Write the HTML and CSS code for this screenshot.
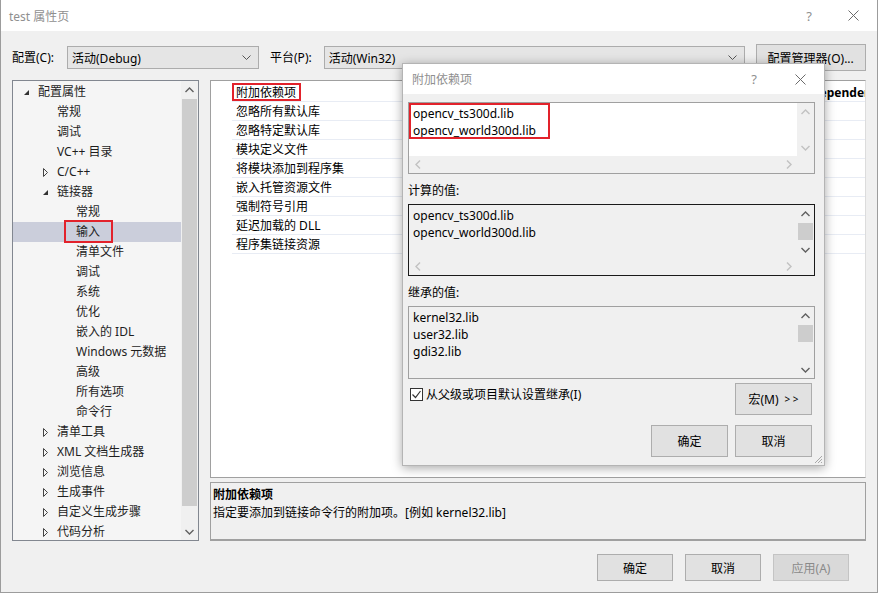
FILE: index.html
```html
<!DOCTYPE html>
<html lang="zh-CN">
<head>
    <meta charset="UTF-8">
    <meta name="viewport" content="width=device-width, initial-scale=1.0">
    <title>test 属性页</title>
    <link rel="stylesheet" href="styles.css">
</head>
<body>
    <div class="window">
        <div class="titlebar">
            <span class="title">test 属性页</span>
            <span class="help">?</span>
            <span class="close">
                <svg width="11" height="11" viewBox="0 0 11 11"><path d="M0.5 0.5 L10.5 10.5 M10.5 0.5 L0.5 10.5" stroke="#6b6b6b" stroke-width="1"/></svg>
            </span>
        </div>
        <div class="body">
            <div class="config_row">
                <span class="label">配置(C):</span>
                <div class="select sel_config">
                    <span>活动(Debug)</span>
                    <svg width="9" height="6" viewBox="0 0 9 6"><path d="M0.5 0.5 L4.5 4.5 L8.5 0.5" stroke="#555" fill="none"/></svg>
                </div>
                <span class="label">平台(P):</span>
                <div class="select sel_platform">
                    <span>活动(Win32)</span>
                    <svg width="9" height="6" viewBox="0 0 9 6"><path d="M0.5 0.5 L4.5 4.5 L8.5 0.5" stroke="#555" fill="none"/></svg>
                </div>
                <div class="btn btn_manager">配置管理器(O)...</div>
            </div>

            <div class="main">
                <div class="tree">
                    <div class="tree_rows">
                        <div class="trow lv0"><span class="exp"><svg width="7" height="7" viewBox="0 0 7 7"><polygon points="6,1 6,6 1,6" fill="#333"/></svg></span>配置属性</div>
                        <div class="trow lv1"><span class="exp"></span>常规</div>
                        <div class="trow lv1"><span class="exp"></span>调试</div>
                        <div class="trow lv1"><span class="exp"></span>VC++ 目录</div>
                        <div class="trow lv1"><span class="exp"><svg width="7" height="9" viewBox="0 0 7 9"><polygon points="1.5,0.5 5.5,4.5 1.5,8.5" fill="none" stroke="#444"/></svg></span>C/C++</div>
                        <div class="trow lv1"><span class="exp"><svg width="7" height="7" viewBox="0 0 7 7"><polygon points="6,1 6,6 1,6" fill="#333"/></svg></span>链接器</div>
                        <div class="trow lv2"><span class="exp"></span>常规</div>
                        <div class="trow lv2 selected"><span class="exp"></span><span class="mark mark_tree">输入</span></div>
                        <div class="trow lv2"><span class="exp"></span>清单文件</div>
                        <div class="trow lv2"><span class="exp"></span>调试</div>
                        <div class="trow lv2"><span class="exp"></span>系统</div>
                        <div class="trow lv2"><span class="exp"></span>优化</div>
                        <div class="trow lv2"><span class="exp"></span>嵌入的 IDL</div>
                        <div class="trow lv2"><span class="exp"></span>Windows 元数据</div>
                        <div class="trow lv2"><span class="exp"></span>高级</div>
                        <div class="trow lv2"><span class="exp"></span>所有选项</div>
                        <div class="trow lv2"><span class="exp"></span>命令行</div>
                        <div class="trow lv1"><span class="exp"><svg width="7" height="9" viewBox="0 0 7 9"><polygon points="1.5,0.5 5.5,4.5 1.5,8.5" fill="none" stroke="#444"/></svg></span>清单工具</div>
                        <div class="trow lv1"><span class="exp"><svg width="7" height="9" viewBox="0 0 7 9"><polygon points="1.5,0.5 5.5,4.5 1.5,8.5" fill="none" stroke="#444"/></svg></span>XML 文档生成器</div>
                        <div class="trow lv1"><span class="exp"><svg width="7" height="9" viewBox="0 0 7 9"><polygon points="1.5,0.5 5.5,4.5 1.5,8.5" fill="none" stroke="#444"/></svg></span>浏览信息</div>
                        <div class="trow lv1"><span class="exp"><svg width="7" height="9" viewBox="0 0 7 9"><polygon points="1.5,0.5 5.5,4.5 1.5,8.5" fill="none" stroke="#444"/></svg></span>生成事件</div>
                        <div class="trow lv1"><span class="exp"><svg width="7" height="9" viewBox="0 0 7 9"><polygon points="1.5,0.5 5.5,4.5 1.5,8.5" fill="none" stroke="#444"/></svg></span>自定义生成步骤</div>
                        <div class="trow lv1"><span class="exp"><svg width="7" height="9" viewBox="0 0 7 9"><polygon points="1.5,0.5 5.5,4.5 1.5,8.5" fill="none" stroke="#444"/></svg></span>代码分析</div>
                    </div>
                    <div class="tree_scroll">
                        <div class="arrow"><svg width="9" height="6" viewBox="0 0 9 6"><path d="M0.5 5 L4.5 1 L8.5 5" stroke="#606060" stroke-width="1.4" fill="none"/></svg></div>
                        <div class="tree_thumb"></div>
                        <div class="spacer"></div>
                        <div class="arrow"><svg width="9" height="6" viewBox="0 0 9 6"><path d="M0.5 1 L4.5 5 L8.5 1" stroke="#606060" stroke-width="1.4" fill="none"/></svg></div>
                    </div>
                </div>

                <div class="right">
                    <div class="grid">
                        <div class="prow"><span class="pname"><span class="mark mark_prop">附加依赖项</span></span><span class="pval">opencv_ts300d.lib;opencv_world300d.lib;%(AdditionalDependencies)</span></div>
                        <div class="prow"><span class="pname">忽略所有默认库</span><span class="pval"></span></div>
                        <div class="prow"><span class="pname">忽略特定默认库</span><span class="pval"></span></div>
                        <div class="prow"><span class="pname">模块定义文件</span><span class="pval"></span></div>
                        <div class="prow"><span class="pname">将模块添加到程序集</span><span class="pval"></span></div>
                        <div class="prow"><span class="pname">嵌入托管资源文件</span><span class="pval"></span></div>
                        <div class="prow"><span class="pname">强制符号引用</span><span class="pval"></span></div>
                        <div class="prow"><span class="pname">延迟加载的 DLL</span><span class="pval"></span></div>
                        <div class="prow"><span class="pname">程序集链接资源</span><span class="pval"></span></div>
                    </div>
                    <div class="desc">
                        <div class="desc_title">附加依赖项</div>
                        <div class="desc_text">指定要添加到链接命令行的附加项。[例如 kernel32.lib]</div>
                    </div>
                </div>
            </div>

            <div class="footer">
                <div class="btn">确定</div>
                <div class="btn">取消</div>
                <div class="btn disabled">应用(A)</div>
            </div>
        </div>

        <div class="dialog">
            <div class="dlg_titlebar">
                <span class="dlg_title">附加依赖项</span>
                <span class="help">?</span>
                <span class="close">
                    <svg width="11" height="11" viewBox="0 0 11 11"><path d="M0.5 0.5 L10.5 10.5 M10.5 0.5 L0.5 10.5" stroke="#6b6b6b" stroke-width="1"/></svg>
                </span>
            </div>
            <div class="dlg_body">
                <div class="listbox edit">
                    <div class="list_text"><span class="mark mark_edit">opencv_ts300d.lib<br>opencv_world300d.lib</span></div>
                    <div class="vbar">
                        <div class="arrow"><svg width="9" height="6" viewBox="0 0 9 6"><path d="M0.5 5 L4.5 1 L8.5 5" stroke="#c2c2c2" stroke-width="1.4" fill="none"/></svg></div>
                        <div class="spacer"></div>
                        <div class="arrow"><svg width="9" height="6" viewBox="0 0 9 6"><path d="M0.5 1 L4.5 5 L8.5 1" stroke="#c2c2c2" stroke-width="1.4" fill="none"/></svg></div>
                    </div>
                    <div class="hbar">
                        <div class="arrow"><svg width="6" height="9" viewBox="0 0 6 9"><path d="M5 0.5 L1 4.5 L5 8.5" stroke="#c2c2c2" stroke-width="1.4" fill="none"/></svg></div>
                        <div class="arrow"><svg width="6" height="9" viewBox="0 0 6 9"><path d="M1 0.5 L5 4.5 L1 8.5" stroke="#c2c2c2" stroke-width="1.4" fill="none"/></svg></div>
                    </div>
                    <div class="corner"></div>
                </div>

                <div class="dlg_label">计算的值:</div>
                <div class="listbox readonly focused">
                    <div class="list_text">opencv_ts300d.lib<br>opencv_world300d.lib</div>
                    <div class="vbar">
                        <div class="arrow"><svg width="9" height="6" viewBox="0 0 9 6"><path d="M0.5 5 L4.5 1 L8.5 5" stroke="#606060" stroke-width="1.4" fill="none"/></svg></div>
                        <div class="thumb"></div>
                        <div class="spacer"></div>
                        <div class="arrow"><svg width="9" height="6" viewBox="0 0 9 6"><path d="M0.5 1 L4.5 5 L8.5 1" stroke="#606060" stroke-width="1.4" fill="none"/></svg></div>
                    </div>
                    <div class="hbar">
                        <div class="arrow"><svg width="6" height="9" viewBox="0 0 6 9"><path d="M5 0.5 L1 4.5 L5 8.5" stroke="#c2c2c2" stroke-width="1.4" fill="none"/></svg></div>
                        <div class="arrow"><svg width="6" height="9" viewBox="0 0 6 9"><path d="M1 0.5 L5 4.5 L1 8.5" stroke="#c2c2c2" stroke-width="1.4" fill="none"/></svg></div>
                    </div>
                    <div class="corner"></div>
                </div>

                <div class="dlg_label">继承的值:</div>
                <div class="listbox readonly nohbar">
                    <div class="list_text">kernel32.lib<br>user32.lib<br>gdi32.lib</div>
                    <div class="vbar">
                        <div class="arrow"><svg width="9" height="6" viewBox="0 0 9 6"><path d="M0.5 5 L4.5 1 L8.5 5" stroke="#606060" stroke-width="1.4" fill="none"/></svg></div>
                        <div class="thumb"></div>
                        <div class="spacer"></div>
                        <div class="arrow"><svg width="9" height="6" viewBox="0 0 9 6"><path d="M0.5 1 L4.5 5 L8.5 1" stroke="#606060" stroke-width="1.4" fill="none"/></svg></div>
                    </div>
                </div>

                <div class="dlg_row">
                    <div class="check">
                        <span class="box"><svg width="11" height="11" viewBox="0 0 11 11"><path d="M1.5 5.5 L4.5 8.5 L9.5 2" stroke="#333" stroke-width="1.2" fill="none"/></svg></span>
                        <span>从父级或项目默认设置继承(I)</span>
                    </div>
                    <div class="btn dlg_btn">宏(M)<span class="gt">&gt; &gt;</span></div>
                </div>
                <div class="dlg_buttons">
                    <div class="btn dlg_btn">确定</div>
                    <div class="btn dlg_btn">取消</div>
                </div>
            </div>
            <svg class="grip" width="10" height="10" viewBox="0 0 10 10"><path d="M9 2 L2 9 M9 5 L5 9 M9 8 L8 9" stroke="#a8a8a8" stroke-width="1"/></svg>
        </div>
    </div>
</body>
</html>
```

FILE: styles.css
```css
*{
    margin: 0;
    padding: 0;
    box-sizing: border-box;
}
body{
    width: 878px;
    height: 593px;
    overflow: hidden;
    background: #fff;
    font-family: "Noto Sans", "Noto Sans CJK SC", sans-serif;
    font-size: 12px;
    color: #000;
}
.window{
    position: relative;
    width: 878px;
    height: 593px;
    border: 1px solid #9c9c9c;
    border-top: none;
    background: #f0f0f0;
    display: flex;
    flex-direction: column;
}
.titlebar{
    height: 31px;
    background: #fff;
    display: flex;
    align-items: center;
    padding-left: 8px;
    flex-shrink: 0;
}
.title{
    color: #8f8f8f;
    flex: 1;
}
.help{
    color: #8f8f8f;
    font-size: 13px;
}
.titlebar .help{
    margin-right: 36px;
}
.close{
    display: flex;
    align-items: center;
}
.titlebar .close{
    margin-right: 18px;
}
.body{
    flex: 1;
    display: flex;
    flex-direction: column;
    padding: 13px 11px 0 11px;
}
.config_row{
    height: 27px;
    display: flex;
    align-items: center;
}
.label{
    line-height: 23px;
}
.select{
    height: 23px;
    background: #e5e5e5;
    border: 1px solid #acacac;
    display: flex;
    align-items: center;
    justify-content: space-between;
    padding: 0 7px 0 4px;
}
.sel_config{
    width: 192px;
    margin-left: 13px;
    margin-right: 11px;
}
.sel_platform{
    width: 421px;
    margin-left: 12px;
    margin-right: 11px;
}
.btn{
    height: 27px;
    background: #e1e1e1;
    border: 1px solid #adadad;
    display: flex;
    align-items: center;
    justify-content: center;
    width: 76px;
}
.btn_manager{
    width: 110px;
}
.btn.disabled{
    background: #d9d9d9;
    border-color: #c4c4c4;
    color: #8a8a8a;
}
.main{
    margin-top: 9px;
    height: 461px;
    display: flex;
    gap: 11px;
}
.tree{
    width: 187px;
    border: 1px solid #828790;
    background: #f5f5f5;
    display: flex;
    overflow: hidden;
}
.tree_rows{
    flex: 1;
    padding-top: 1px;
    color: #1e1e1e;
}
.trow{
    height: 20px;
    line-height: 20px;
    display: flex;
    align-items: center;
    white-space: nowrap;
}
.trow.lv0{ padding-left: 6px; }
.trow.lv1{ padding-left: 25px; }
.trow.lv2{ padding-left: 44px; }
.trow.selected{
    background: #cbcedb;
}
.exp{
    width: 19px;
    height: 20px;
    display: flex;
    align-items: center;
    padding-left: 4px;
}
.tree_scroll{
    width: 17px;
    background: #f0f0f0;
    display: flex;
    flex-direction: column;
}
.arrow{
    width: 17px;
    height: 17px;
    flex-shrink: 0;
    display: flex;
    align-items: center;
    justify-content: center;
}
.tree_thumb{
    height: 407px;
    background: #cdcdcd;
    margin: 1px 1px 0;
}
.spacer{
    flex: 1;
}
.mark{
    position: relative;
}
.mark::after{
    content: "";
    position: absolute;
    border: 2px solid #e2222b;
}
.mark_tree::after{
    left: -12px;
    right: -13px;
    top: -2px;
    bottom: -1px;
}
.mark_prop::after{
    left: -4px;
    right: -5px;
    top: -1px;
    bottom: 0;
}
.mark_edit{
    display: inline-block;
}
.mark_edit::after{
    left: -4px;
    right: -14px;
    top: -2px;
    bottom: 0;
}
.right{
    width: 656px;
    display: flex;
    flex-direction: column;
    gap: 4px;
}
.grid{
    height: 398px;
    background: #fff;
    border: 1px solid #a0a0a0;
    border-right-color: #dcdcdc;
    padding-top: 2px;
    overflow: hidden;
}
.prow{
    height: 19px;
    margin-left: 21px;
    border-bottom: 1px solid #e8ecf4;
    display: flex;
    align-items: center;
    white-space: nowrap;
}
.pname{
    width: 257px;
    padding-left: 4px;
    flex-shrink: 0;
}
.pval{
    font-weight: bold;
    padding-left: 4px;
}
.desc{
    flex: 1;
    border: 1px solid #a0a0a0;
    border-bottom: 2px solid #a0a0a0;
    padding: 3px 2px;
    line-height: 18px;
}
.desc_title{
    font-weight: bold;
}
.footer{
    margin-top: 13px;
    display: flex;
    justify-content: flex-end;
    gap: 12px;
    padding-right: 17px;
}
.dialog{
    position: absolute;
    left: 401px;
    top: 63px;
    width: 423px;
    height: 403px;
    background: #f0f0f0;
    border: 1px solid #b4b4b4;
    box-shadow: 0 2px 10px rgba(0, 0, 0, 0.35);
}
.dlg_titlebar{
    height: 30px;
    background: #fff;
    display: flex;
    align-items: center;
    padding-left: 9px;
}
.dlg_title{
    color: #8f8f8f;
    flex: 1;
}
.dlg_titlebar .help{
    margin-right: 38px;
}
.dlg_titlebar .close{
    margin-right: 18px;
}
.dlg_body{
    padding: 8px 9px 0 5px;
}
.listbox{
    height: 72px;
    border: 1px solid #a0a0a0;
    display: grid;
    grid-template-columns: 1fr 17px;
    grid-template-rows: 1fr 17px;
}
.listbox.focused{
    border-color: #1a1a1a;
}
.listbox.nohbar{
    height: 73px;
    grid-template-rows: 1fr;
}
.list_text{
    padding: 2px 4px;
    line-height: 17px;
    background: #f0f0f0;
    white-space: nowrap;
    overflow: hidden;
}
.edit .list_text{
    background: #fff;
}
.vbar{
    background: #f0f0f0;
    display: flex;
    flex-direction: column;
}
.thumb{
    height: 17px;
    background: #cdcdcd;
    margin: 1px 1px 0;
}
.hbar{
    background: #f0f0f0;
    display: flex;
    justify-content: space-between;
}
.corner{
    background: #f0f0f0;
}
.dlg_label{
    height: 18px;
    line-height: 18px;
    margin-top: 8px;
    margin-bottom: 4px;
}
.dlg_row{
    margin-top: 4px;
    display: flex;
    justify-content: space-between;
    align-items: flex-start;
}
.check{
    display: flex;
    align-items: center;
    gap: 3px;
    padding-left: 2px;
    margin-top: 4px;
    height: 14px;
}
.box{
    width: 13px;
    height: 13px;
    background: #fff;
    border: 1px solid #333;
    display: flex;
    align-items: center;
    justify-content: center;
}
.dlg_btn{
    width: 77px;
    height: 32px;
    margin-right: 3px;
}
.gt{
    font-size: 10px;
    margin-left: 6px;
}
.dlg_buttons{
    margin-top: 10px;
    display: flex;
    justify-content: flex-end;
    gap: 4px;
}
.grip{
    position: absolute;
    right: 1px;
    bottom: 1px;
}
```
